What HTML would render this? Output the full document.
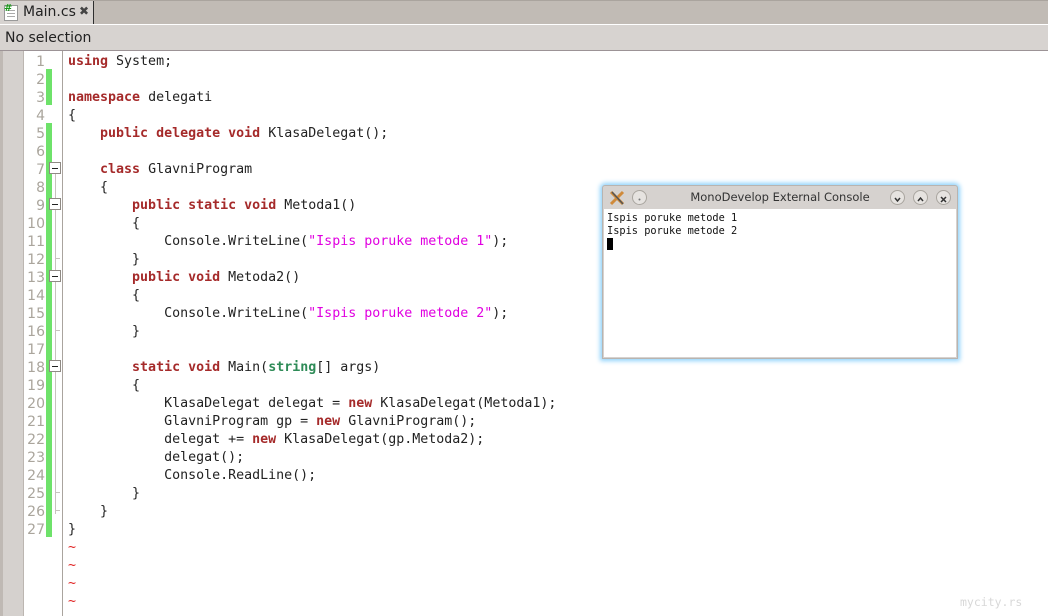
<!DOCTYPE html>
<html><head><meta charset="utf-8"><style>
*{margin:0;padding:0;box-sizing:border-box}
html,body{width:1048px;height:616px;overflow:hidden}
body{background:#fff;font-family:"DejaVu Sans","Liberation Sans",sans-serif;position:relative}
#tabbar{position:absolute;left:0;top:0;width:1048px;height:24px;background:#c1bbb5;border-top:1px solid #aaa49e}
#tab{position:absolute;left:0;top:0;width:94px;height:24px;background:#d7d3d0;border-right:1px solid #2e2e2e;font-size:14px;color:#222}
#tab .ic{position:absolute;left:4px;top:4px;width:14px;height:16px;background:#fff;border:1px solid #999}
#tab .ic i{position:absolute;left:2px;height:1px;width:8px;background:#aaa}
#tab .t{position:absolute;left:23px;top:3px}
#tab .x{position:absolute;left:79px;top:3px;font-size:12px;font-weight:bold;color:#444}
#sep{position:absolute;left:0;top:24px;width:1048px;height:1px;background:#fff}
#status{position:absolute;left:0;top:25px;width:1048px;height:26px;background:#d7d3d0;border-bottom:1px solid #9c9396;font-size:14px;color:#222;padding:5px 0 0 5px}
#lg{position:absolute;left:0;top:51px;width:24px;height:565px;background:#d5d1ce;border-left:3px solid #bfb9b4;border-right:1px solid #bcb6b1}
#nums{position:absolute;left:22px;top:53px;width:24px;font-family:"DejaVu Sans","Liberation Sans",sans-serif;font-size:14px;color:#aaa59c;text-align:right;padding-right:1px}
#nums div,#code div{height:18px;line-height:18px}
.gb{position:absolute;left:46px;width:6px;background:#6ee26a}
#vline{position:absolute;left:62px;top:51px;width:1px;height:565px;background:#aaa49e}
.fm{position:absolute;left:49px;width:12px;height:12px;background:#fff;border:1px solid #8f8a84}
.fm:after{content:"";position:absolute;left:2px;top:5px;width:6px;height:1px;background:#222}
.fl{position:absolute;left:55px;width:1px;background:#c8c3be}
.fe{position:absolute;left:55px;width:5px;height:1px;background:#c8c3be}
#code{position:absolute;left:68px;top:53px;font-family:"DejaVu Sans Mono","Liberation Mono",monospace;font-size:13.3px;color:#222}
#code div{white-space:pre}
.k{color:#a52a2a;font-weight:bold}
.s{color:#e000e0}
.ty{color:#2e8b57;font-weight:bold}
.tl{color:#e02020}
#win{position:absolute;left:602px;top:185px;width:356px;height:174px;background:#d6d2cf;border:1px solid #b8b4b0;box-shadow:0 0 5px 2px #8fd2fb;border-radius:3px 3px 0 0}
#win .title{position:absolute;left:0;top:0;width:354px;height:23px;font-size:11.5px;color:#333;text-align:center;line-height:23px}
.btn{position:absolute;top:4px;width:15px;height:15px;border-radius:50%;background:#e6e3e0;border:1px solid #a9a59f}
#con{position:absolute;left:1px;top:23px;width:352px;height:148px;background:#fff;font-family:"DejaVu Sans Mono","Liberation Mono",monospace;font-size:10.3px;color:#111;padding:3px 0 0 3px;line-height:13px}
#cur{display:inline-block;width:6px;height:12px;background:#000;vertical-align:top}
#wm{position:absolute;left:960px;top:595px;font-family:"DejaVu Sans Mono",monospace;font-size:11.5px;color:#d8d8d8}
</style></head><body>
<div id="tabbar"><div id="tab"><div class="ic"><i style="top:4px"></i><i style="top:7px"></i><i style="top:10px"></i><b style="position:absolute;left:-1px;top:-3px;color:#1a9a1a;font-size:10px">#</b></div><span class="t">Main.cs</span><span class="x">✖</span></div></div>
<div id="sep"></div>
<div id="status">No selection</div>
<div id="lg"></div>
<div id="nums"><div>1</div><div>2</div><div>3</div><div>4</div><div>5</div><div>6</div><div>7</div><div>8</div><div>9</div><div>10</div><div>11</div><div>12</div><div>13</div><div>14</div><div>15</div><div>16</div><div>17</div><div>18</div><div>19</div><div>20</div><div>21</div><div>22</div><div>23</div><div>24</div><div>25</div><div>26</div><div>27</div></div>
<div class="gb" style="top:69px;height:36px"></div>
<div class="gb" style="top:123px;height:414px"></div>
<div id="vline"></div>
<div class="fl" style="top:174px;height:340px"></div>
<div class="fe" style="top:258px"></div>
<div class="fe" style="top:330px"></div>
<div class="fe" style="top:492px"></div>
<div class="fe" style="top:510px"></div>
<div class="fm" style="top:162px"></div>
<div class="fm" style="top:198px"></div>
<div class="fm" style="top:270px"></div>
<div class="fm" style="top:360px"></div>
<div id="code"><div><span class="k">using</span> System;</div><div> </div><div><span class="k">namespace</span> delegati</div><div>{</div><div>    <span class="k">public</span> <span class="k">delegate</span> <span class="k">void</span> KlasaDelegat();</div><div> </div><div>    <span class="k">class</span> GlavniProgram</div><div>    {</div><div>        <span class="k">public</span> <span class="k">static</span> <span class="k">void</span> Metoda1()</div><div>        {</div><div>            Console.WriteLine(<span class="s">"Ispis poruke metode 1"</span>);</div><div>        }</div><div>        <span class="k">public</span> <span class="k">void</span> Metoda2()</div><div>        {</div><div>            Console.WriteLine(<span class="s">"Ispis poruke metode 2"</span>);</div><div>        }</div><div> </div><div>        <span class="k">static</span> <span class="k">void</span> Main(<span class="ty">string</span>[] args)</div><div>        {</div><div>            KlasaDelegat delegat = <span class="k">new</span> KlasaDelegat(Metoda1);</div><div>            GlavniProgram gp = <span class="k">new</span> GlavniProgram();</div><div>            delegat += <span class="k">new</span> KlasaDelegat(gp.Metoda2);</div><div>            delegat();</div><div>            Console.ReadLine();</div><div>        }</div><div>    }</div><div>}</div><div class="tl">~</div><div class="tl">~</div><div class="tl">~</div><div class="tl">~</div></div>
<div id="win">
<div class="title">MonoDevelop External Console</div>
<svg style="position:absolute;left:6px;top:4px" width="16" height="16" viewBox="0 0 16 16"><path d="M2 2 L14 14 M14 2 L2 14" stroke="#d08a3a" stroke-width="3"/><path d="M3 2 L14 14" stroke="#555" stroke-width="1.5"/></svg>
<div class="btn" style="left:29px"><svg width="13" height="13"><circle cx="6.5" cy="6.5" r="1" fill="#777"/></svg></div>
<div class="btn" style="left:287px"><svg width="13" height="13"><path d="M4 5 L6.5 8 L9 5" stroke="#333" stroke-width="1.5" fill="none"/></svg></div>
<div class="btn" style="left:310px"><svg width="13" height="13"><path d="M4 8 L6.5 5 L9 8" stroke="#333" stroke-width="1.5" fill="none"/></svg></div>
<div class="btn" style="left:333px"><svg width="13" height="13"><path d="M4 4 L9 9 M9 4 L4 9" stroke="#333" stroke-width="1.5"/></svg></div>
<div id="con">Ispis poruke metode 1<br>Ispis poruke metode 2<br><span id="cur"></span></div>
</div>
<div id="wm">mycity.rs</div>
</body></html>
